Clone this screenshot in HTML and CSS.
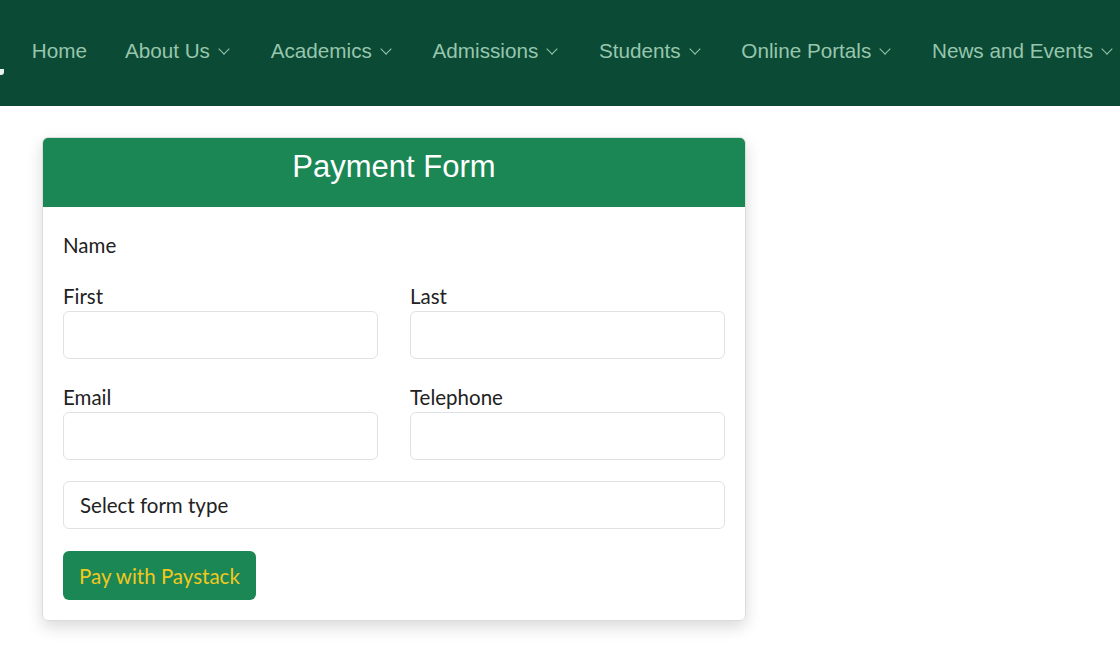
FILE: index.html
```html
<!DOCTYPE html>
<html lang="en">
<head>
  <meta charset="UTF-8" />
  <meta name="viewport" content="width=device-width, initial-scale=1" />
  <title>Payment Form</title>
  <link rel="stylesheet" href="styles.css">
</head>
<body>

  <nav class="topnav">
    <span class="logo-edge"></span>
    <ul class="menu">
      <li><a href="#" class="home">Home</a></li>
      <li><a href="#">About Us<span class="caret"></span></a></li>
      <li><a href="#">Academics<span class="caret"></span></a></li>
      <li><a href="#">Admissions<span class="caret"></span></a></li>
      <li><a href="#">Students<span class="caret"></span></a></li>
      <li><a href="#">Online Portals<span class="caret"></span></a></li>
      <li><a href="#">News and Events<span class="caret"></span></a></li>
    </ul>
  </nav>

  <main class="page">
    <div class="card">
      <div class="card-header">Payment Form</div>
      <form class="card-body" onsubmit="return false">
        <div class="group-title">Name</div>
        <div class="row">
          <label class="field">
            <span>First</span>
            <input type="text" />
          </label>
          <label class="field">
            <span>Last</span>
            <input type="text" />
          </label>
        </div>
        <div class="row">
          <label class="field">
            <span>Email</span>
            <input type="email" />
          </label>
          <label class="field">
            <span>Telephone</span>
            <input type="tel" />
          </label>
        </div>
        <select class="form-type">
          <option>Select form type</option>
        </select>
        <button class="pay" type="submit">Pay with Paystack</button>
      </form>
    </div>
  </main>

</body>
</html>
```

FILE: styles.css
```css
body {
  margin: 0;
  background-color: #fff;
  font-family: Lato, "Noto Sans", sans-serif;
  color: #222;
}

/* top navigation */
.topnav {
  display: flex;
  align-items: center;
  height: 106px;
  background-color: #0b4a35;
  position: relative;
}
.logo-edge {
  position: absolute;
  left: 0;
  top: 69px;
  width: 4px;
  height: 6px;
  background-color: #e8f3ee;
  border-radius: 0 0 3px 0;
}
.menu {
  display: flex;
  list-style: none;
  margin: 0;
  padding: 0 0 4px 11.5px;
}
.menu a {
  display: flex;
  align-items: center;
  padding: 0 20.35px;
  font-family: "Liberation Sans", Arial, sans-serif;
  font-size: 20.7px;
  color: #97c6ad;
  text-decoration: none;
  white-space: nowrap;
}
.menu a.home {
  padding-right: 17.5px;
}
.caret {
  width: 7px;
  height: 7px;
  margin: 0 2px 5px 10px;
  border-right: 1.5px solid #97c6ad;
  border-bottom: 1.5px solid #97c6ad;
  transform: rotate(45deg);
}

/* card */
.page {
  padding: 31px 42px;
}
.card {
  width: 702px;
  border: 1px solid #dcdcdc;
  border-radius: 6px;
  box-shadow: 0 6px 16px rgba(0, 0, 0, 0.15);
  overflow: hidden;
}
.card-header {
  height: 69px;
  line-height: 58px;
  text-align: center;
  background-color: #1b8755;
  color: #fff;
  font-family: "Liberation Sans", Arial, sans-serif;
  font-size: 31px;
}
.card-body {
  display: flex;
  flex-direction: column;
  padding: 23px 20px 20px 20px;
  font-size: 20.5px;
}
.group-title {
  line-height: 30px;
  margin-bottom: 21px;
}
.row {
  display: grid;
  grid-template-columns: 1fr 1fr;
  gap: 32px;
  margin-bottom: 23px;
}
.field {
  display: flex;
  flex-direction: column;
}
.field span {
  line-height: 30px;
}
.field input,
.form-type {
  height: 48px;
  border: 1px solid #dfe2e5;
  border-radius: 6px;
  box-sizing: border-box;
  font: inherit;
  background-color: #fff;
}
.form-type {
  appearance: none;
  padding: 0 16px;
  color: #222;
  margin-top: -2px;
  margin-bottom: 22px;
}
.pay {
  align-self: flex-start;
  height: 49px;
  padding: 0 16px;
  border: none;
  border-radius: 6px;
  background-color: #1b8755;
  color: #f2c81e;
  font: inherit;
  cursor: pointer;
}
```
